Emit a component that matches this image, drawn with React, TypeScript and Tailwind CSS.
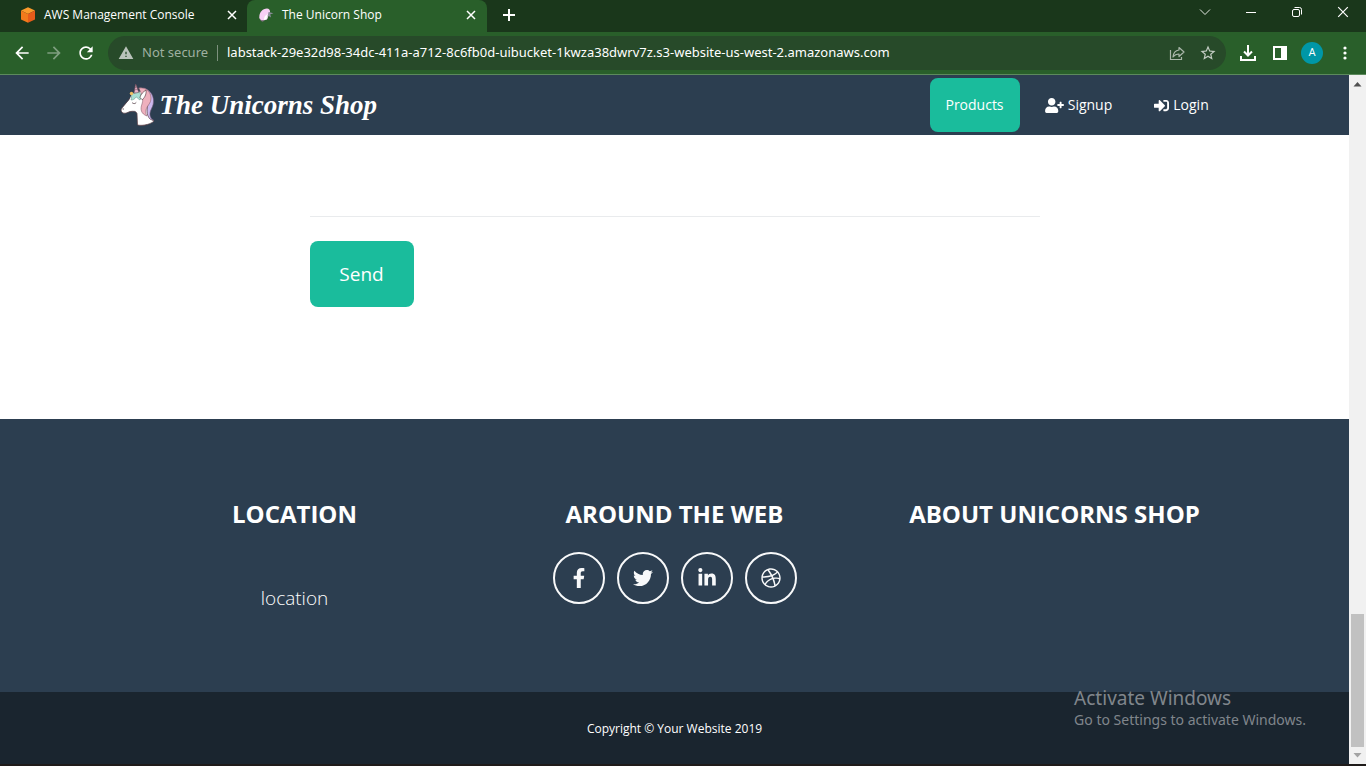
import React from "react";
import {
  FaDribbble,
  FaFacebookF,
  FaLinkedinIn,
  FaSignInAlt,
  FaTwitter,
  FaUserPlus,
} from "react-icons/fa";
import { MdArrowBack, MdArrowForward, MdRefresh, MdStarBorder, MdWarning } from "react-icons/md";

const CubeIcon = () => (
  <svg viewBox="0 0 16 16" className="size-4 shrink-0" aria-hidden="true">
    <path d="M8 0.3 15 3.4 8 7 1 3.4Z" fill="#fb9a2c" />
    <path d="M1 3.4 8 7v8.8L1 12.4Z" fill="#f27a1c" />
    <path d="M15 3.4 8 7v8.8l7-3.4Z" fill="#e65c1a" />
  </svg>
);

const UnicornFavicon = () => (
  <svg viewBox="0 0 16 16" className="size-4 shrink-0" aria-hidden="true">
    <path d="M1.300 10.500C1 5.500 4.500 1.500 9 1.500c2 0 3 1.500 3 3l-1 3-2 5-4 1c-2 .2-3.500-1-3.700-3Z" fill="#f8cff5" />
    <path d="M6 13c0-3 1-5 4-6l-1 5Z" fill="#fff" />
    <path d="M10.500 5 15.500 6.300l-3.200.9L13 10.500l-3-2-1.800 4L10 7.500Z" fill="#8d8f9c" />
    <path d="M2 11.500c1 2 3 2 5 1.500l-2 1.500c-1.500.2-2.700-.7-3-3Z" fill="#927590" />
  </svg>
);

const UnicornLogo = () => (
  <svg viewBox="0 0 36 44" className="h-11 w-9 shrink-0" aria-hidden="true" strokeLinejoin="round" strokeLinecap="round">
    <path d="M24 5c6 2 9.500 7 9.500 13 0 5-2 7-3 10s-1 7 3.500 9.500c-5 .8-9-3-9-9Z" fill="#cdb8ee" stroke="#6f5b78" strokeWidth=".6" />
    <path d="M18 38c2-3 2-7 1-11l9-6c-1 5-2 11 2 15l4 2c-3 3-10 5-15 4Z" fill="#fff" stroke="#5a3d45" strokeWidth=".7" />
    <path d="M12 11 9 17 2 25c-1.500 2-1 4 1 5 3 1 5-1 7-1.500 4-.5 6-.5 7 2l.5 11.500c3 .6 6 .4 9-.4L25 29l2-15-5-6Z" fill="#fff" />
    <path d="M10 15 2 25c-1.500 2-1 4 1 5 3 1 5-1 7-1.500 4-.5 6-.5 7 2l.5 11.500c3 .6 6 .4 9-.4" fill="none" stroke="#5a3d45" strokeWidth=".7" />
    <path d="M19 5c7-1 12 4 12 10 0 6-4 7-5 12-.5 3 0 4 1 6-6-2-7-7-5-12 1-3 1-6 0-9Z" fill="#eeb0bd" stroke="#8c5f70" strokeWidth=".6" />
    <path d="M18 8c3 2 4 6 2 9-2-1-3-3-4-3-1 2-3 3-5 3 1-2 0-4 1-6Z" fill="#a9e0d3" stroke="#5a8c83" strokeWidth=".5" />
    <path d="M20 14c1-3 3-5 6-7 .5 3-.5 7-3.500 9.500Z" fill="#fff" stroke="#5a3d45" strokeWidth=".7" />
    <path d="M14 10 15.700 1l3 8Z" fill="#eab4c9" stroke="#6f4a58" strokeWidth=".6" />
    <path d="m14.700 7 3-1M15 4.500l2-.5" stroke="#6f4a58" strokeWidth=".5" />
    <circle cx="11.500" cy="10.500" r="1.700" fill="#f0bf62" />
    <path d="M12.500 20c1.500 1 2.500.8 3.500-.3M3 26h.6" fill="none" stroke="#4a353c" strokeWidth=".8" />
  </svg>
);

const CloseIcon = ({ className }: { className: string }) => (
  <svg viewBox="0 0 10 10" className={className} stroke="currentColor" fill="none" aria-hidden="true">
    <path d="m1 1 8 8M9 1 1 9" />
  </svg>
);

function TabStrip() {
  return (
    <div className="flex h-8 bg-[#1a371b] text-xs text-white">
      <div className="flex w-[247px] items-center gap-2 pl-5 pr-[9px] pb-[2px]">
        <CubeIcon />
        <span className="flex-1 whitespace-nowrap">AWS Management Console</span>
        <button aria-label="Close AWS Management Console" className="p-[1px]">
          <CloseIcon className="size-[10px] stroke-[1.5]" />
        </button>
      </div>
      <div className="flex w-60 items-center gap-2 rounded-t-lg bg-[#295f2a] pl-[11px] pr-[10px] pb-[2px]">
        <UnicornFavicon />
        <span className="flex-1 whitespace-nowrap">The Unicorn Shop</span>
        <button aria-label="Close The Unicorn Shop" className="p-[1px]">
          <CloseIcon className="size-[10px] stroke-[1.5]" />
        </button>
      </div>
      <button aria-label="New tab" className="ml-4 pb-[2px]">
        <svg viewBox="0 0 12 12" className="size-3" stroke="currentColor" strokeWidth="2" aria-hidden="true">
          <path d="M6 0v12M0 6h12" />
        </svg>
      </button>
      <div className="ml-auto flex">
        <button aria-label="Search tabs" className="grid w-[46px] place-items-center pb-2">
          <svg viewBox="0 0 12 8" className="h-2 w-3" fill="none" stroke="#e4e9e4" aria-hidden="true">
            <path d="m1 1.500 5 5 5-5" />
          </svg>
        </button>
        <button aria-label="Minimize" className="grid w-[46px] place-items-center pb-2">
          <svg viewBox="0 0 10 10" className="size-[10px]" stroke="white" aria-hidden="true">
            <path d="M0 5.500h10" />
          </svg>
        </button>
        <button aria-label="Restore" className="grid w-[46px] place-items-center pb-2">
          <svg viewBox="0 0 10 10" className="size-[10px]" fill="none" stroke="white" aria-hidden="true">
            <rect x=".5" y="2.500" width="7" height="7" rx="1.500" />
            <path d="M2.500.500h5a2 2 0 0 1 2 2v5" />
          </svg>
        </button>
        <button aria-label="Close window" className="grid w-[46px] place-items-center pb-2">
          <CloseIcon className="size-3 stroke-1" />
        </button>
      </div>
    </div>
  );
}

function Toolbar() {
  return (
    <div className="flex h-[43px] items-center border-b border-[#5c8a5c] bg-[#295f2a] pl-3 pr-[19px] text-white">
      <div className="flex w-24 gap-3">
        <button aria-label="Back"><MdArrowBack className="size-5" /></button>
        <button aria-label="Forward" className="text-[#7f9f80]"><MdArrowForward className="size-5" /></button>
        <button aria-label="Reload"><MdRefresh className="size-5" /></button>
      </div>
      <div className="flex h-[34px] flex-1 items-center rounded-full bg-[#274a29] pl-[10px] pr-[9px] font-['Noto_Sans',sans-serif] text-[13px]">
        <MdWarning className="size-4 text-[#b9c2ba]" aria-hidden="true" />
        <span className="ml-2 w-[67px] whitespace-nowrap text-[#9fb0a0]">Not secure</span>
        <span className="ml-2 h-4 w-px bg-[#7d917e]" />
        <input
          aria-label="Address"
          className="ml-[9px] min-w-0 flex-1 bg-transparent text-white outline-none"
          defaultValue="labstack-29e32d98-34dc-411a-a712-8c6fb0d-uibucket-1kwza38dwrv7z.s3-website-us-west-2.amazonaws.com"
        />
        <button aria-label="Share">
          <svg viewBox="0 0 16 16" className="size-4" fill="none" stroke="#aab7aa" strokeWidth="1.200" aria-hidden="true">
            <path d="M1.500 5v9.500h11V12" />
            <path d="M10 2.500 15 7l-5 4.500V9C7 9 5.500 10 4 12c.3-4 2.500-6.500 6-7Z" strokeLinejoin="round" />
          </svg>
        </button>
        <button aria-label="Bookmark" className="ml-[14px] text-[#c3ccc3]"><MdStarBorder className="size-[18px]" /></button>
      </div>
      <div className="ml-[14px] flex items-center">
        <button aria-label="Downloads">
          <svg viewBox="0 0 16 16" className="size-4" fill="none" stroke="white" strokeWidth="2" aria-hidden="true">
            <path d="M8 0v10M4 6.500l4 4 4-4M1 11v4h14v-4" />
          </svg>
        </button>
        <button aria-label="Side panel" className="ml-[17px]">
          <svg viewBox="0 0 14 14" className="size-[14px]" aria-hidden="true">
            <path d="M0 0h14v14H0ZM2 2v10h6V2Z" fill="white" fillRule="evenodd" />
          </svg>
        </button>
        <button aria-label="Profile" className="ml-[14px] grid size-[22px] place-items-center rounded-full bg-[#0097a7] font-['Roboto',sans-serif] text-[11px]">A</button>
        <button aria-label="Menu" className="ml-5">
          <svg viewBox="0 0 4 14" className="h-[14px] w-1" fill="white" aria-hidden="true">
            <circle cx="2" cy="2" r="1.600" /><circle cx="2" cy="7" r="1.600" /><circle cx="2" cy="12" r="1.600" />
          </svg>
        </button>
      </div>
    </div>
  );
}

function SiteHeader() {
  return (
    <header className="bg-[#2c3e50]">
      <div className="mx-auto flex h-[60px] max-w-[1140px] items-center justify-between px-[15px] text-white">
        <a href="#" className="flex items-center gap-1">
          <UnicornLogo />
          <span className="whitespace-nowrap font-['Liberation_Serif',cursive] text-[27px] font-bold italic leading-none">The Unicorns Shop</span>
        </a>
        <nav className="flex gap-2 pr-1 text-sm">
          <a href="#products" className="flex h-[54px] w-[90px] items-center justify-center rounded-lg bg-[#1abc9c]">Products</a>
          <a href="#signup" className="flex h-[54px] w-[102px] items-center justify-center gap-1"><FaUserPlus className="h-[15px] w-[19px]" />Signup</a>
          <a href="#login" className="flex h-[54px] w-[88px] items-center justify-center gap-1"><FaSignInAlt className="size-[15px]" />Login</a>
        </nav>
      </div>
    </header>
  );
}

const socials = [
  { label: "Facebook", Icon: FaFacebookF },
  { label: "Twitter", Icon: FaTwitter },
  { label: "LinkedIn", Icon: FaLinkedinIn },
  { label: "Dribbble", Icon: FaDribbble },
];

function SiteFooter() {
  return (
    <footer className="flex flex-1 flex-col text-center text-white">
      <div className="bg-[#2c3e50] pb-[78px] pt-[81px]">
        <div className="mx-auto grid max-w-[1140px] grid-cols-3">
          <div>
            <h4 className="text-2xl font-bold leading-7">LOCATION</h4>
            <p className="pt-[54px] text-[19px] font-light leading-8">location</p>
          </div>
          <div>
            <h4 className="text-2xl font-bold leading-7">AROUND THE WEB</h4>
            <div className="mt-6 flex justify-center gap-3">
              {socials.map(({ label, Icon }) => (
                <a key={label} href="#social" aria-label={label} className="grid size-[52px] place-items-center rounded-full border-2 border-[#f8f9fa] text-xl text-[#f8f9fa]">
                  <Icon />
                </a>
              ))}
            </div>
          </div>
          <div>
            <h4 className="text-2xl font-bold leading-7">ABOUT UNICORNS SHOP</h4>
          </div>
        </div>
      </div>
      <div className="flex flex-1 items-center justify-center bg-[#1a252f] pb-6 pt-[26px] text-xs leading-5">
        Copyright © Your Website 2019
      </div>
    </footer>
  );
}

function Scrollbar() {
  return (
    <div className="flex w-[17px] flex-col items-center bg-[#f1f1f1]" aria-hidden="true">
      <svg viewBox="0 0 17 17" className="size-[17px]"><path d="m8.500 7 4 4.500h-8Z" fill="#505050" /></svg>
      <div className="flex-1" />
      <div className="h-[133px] w-[13px] bg-[#c1c1c1]" />
      <svg viewBox="0 0 17 17" className="size-[17px]"><path d="M4.500 6h8l-4 4.500Z" fill="#a3a3a3" /></svg>
    </div>
  );
}

export default function App() {
  return (
    <div className="relative flex min-h-screen flex-col border-b-2 border-[#1f1b1a] bg-white font-['Open_Sans',sans-serif]">
      <TabStrip />
      <Toolbar />
      <div className="flex flex-1">
        <div className="flex min-w-0 flex-1 flex-col">
          <SiteHeader />
          <main className="mx-auto w-full max-w-[760px] px-[15px] pb-28 pt-[81px]">
            <hr className="border-[#e9ebed]" />
            <button className="mt-6 h-[66px] w-[104px] rounded-lg bg-[#1abc9c] text-[19px] text-white">Send</button>
          </main>
          <SiteFooter />
        </div>
        <Scrollbar />
      </div>
      <div className="pointer-events-none absolute bottom-[34px] right-[60px] font-['Noto_Sans',sans-serif] text-[#80868c]">
        <p className="text-[19px] leading-6">Activate Windows</p>
        <p className="text-[14px] leading-5">Go to Settings to activate Windows.</p>
      </div>
    </div>
  );
}
